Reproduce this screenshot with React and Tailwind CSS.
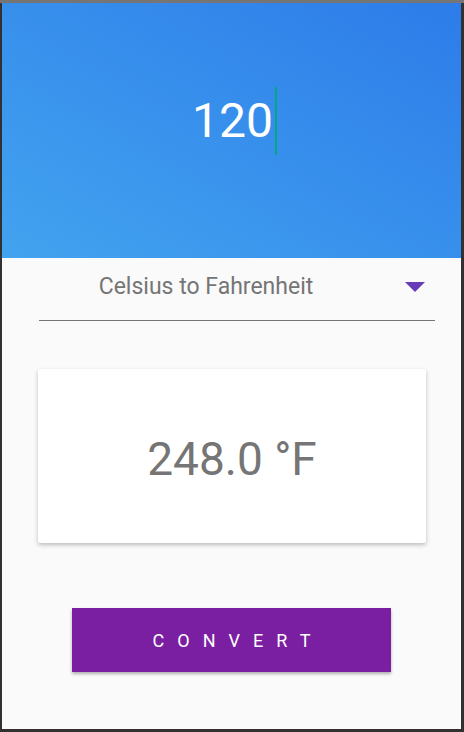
export default function App() {
  return (
    <div className="w-[464px] h-[732px] bg-[#313131] flex flex-col" style={{ fontFamily: "Roboto, 'Liberation Sans', sans-serif" }}>
      <div className="h-[3px] bg-[#757575] shrink-0" />
      <div className="flex-1 flex flex-col pl-[2px] pr-[3px] pb-[3px] min-h-0">
        <div className="flex-1 flex flex-col bg-[#fafafa]">
          <div className="h-[255px] shrink-0 bg-[linear-gradient(to_top_right,#42a3ef,#2d7ce9)] flex items-center justify-center">
            <div className="relative flex items-center mb-[20px]">
              <span className="text-white text-[48px] leading-none ml-[6px]">120</span>
              <span className="w-[2px] h-[68px] bg-[#00a884] ml-[2px]" />
            </div>
          </div>
          <div className="ml-[37px] mr-[26px] mt-[14px] h-[49px] flex items-center border-b border-[#757575]">
            <span className="flex-1 text-center text-[23px] text-[#757575] pr-[22px] mb-[17px]">Celsius to Fahrenheit</span>
            <span className="w-[40px] flex justify-center mb-[19px]">
              <svg width="20" height="10" viewBox="0 0 20 10">
                <path d="M0 0 L20 0 L10 10 Z" fill="#673ab7" />
              </svg>
            </span>
          </div>
          <div className="ml-[36px] mr-[35px] mt-[48px] h-[174px] bg-white rounded-[2px] shadow-[0_2px_4px_rgba(0,0,0,0.25)] flex items-center justify-center">
            <span className="text-[46px] text-[#757575] leading-none mt-[6px]">248.0 °F</span>
          </div>
          <div className="mt-[65px] flex justify-center">
            <button className="w-[319px] h-[64px] bg-[#7b1fa2] text-white text-[18px] tracking-[13px] pl-[13px] shadow-[0_2px_3px_rgba(0,0,0,0.3)]">
              CONVERT
            </button>
          </div>
        </div>
      </div>
    </div>
  );
}
